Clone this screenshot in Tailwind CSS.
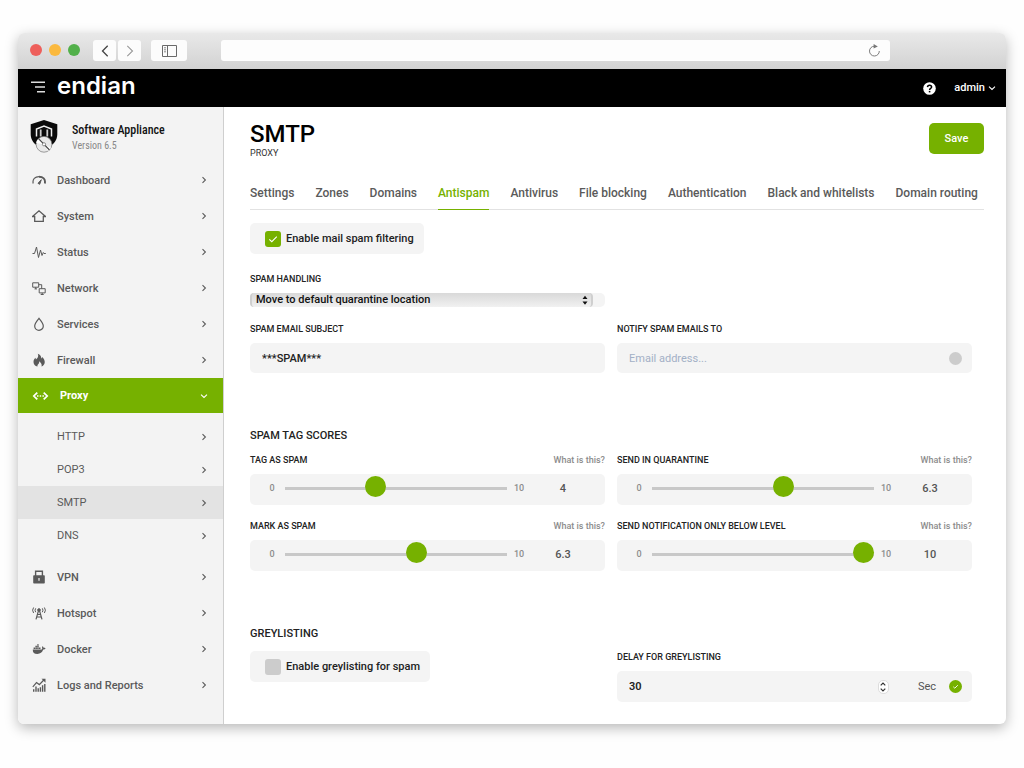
<!DOCTYPE html>
<html lang="en">
<head>
<meta charset="utf-8">
<meta name="viewport" content="width=device-width, initial-scale=1">
<title>SMTP Proxy – Endian</title>
<script src="https://cdn.jsdelivr.net/npm/@tailwindcss/browser@4"></script>
</head>
<body class="min-h-screen bg-[#fefefe] px-[18px] pt-[33px] pb-11 font-['Roboto',sans-serif] text-[11px] leading-[17px] font-medium text-[#222]">
<svg class="hidden" aria-hidden="true">
  <symbol id="chev" viewBox="0 0 8 8"><path d="M2.500 1.200 5.400 4 2.500 6.800" fill="none" stroke="currentColor" stroke-width="1.100"/></symbol>
  <symbol id="chevd" viewBox="0 0 8 8"><path d="M1 2.700 4 5.500 7 2.700" fill="none" stroke="currentColor" stroke-width="1.100"/></symbol>
</svg>
<div class="overflow-hidden rounded-md bg-white shadow-[0_4px_13px_rgba(0,0,0,0.28)]">

  <!-- Browser toolbar -->
  <div class="flex h-9 items-start bg-gradient-to-b from-[#e9e9e9] to-[#d2d2d2] pt-[7px] pl-3">
    <div class="flex h-[21px] items-center gap-[7px] pb-[2px]">
      <span class="size-3 rounded-full bg-[#ee5f5b]"></span>
      <span class="size-3 rounded-full bg-[#fbb93e]"></span>
      <span class="size-3 rounded-full bg-[#52b04a]"></span>
    </div>
    <div class="ml-[13px] flex gap-[2px]">
      <button aria-label="Back" class="flex h-[21px] w-[23px] items-center justify-center rounded-[3px] bg-[#fcfcfc]"><svg class="h-3 w-2" viewBox="0 0 8 12" fill="none" stroke="#444" stroke-width="1.300"><path d="M6.700.800 1.500 6l5.200 5.200"/></svg></button>
      <button aria-label="Forward" class="flex h-[21px] w-[23px] items-center justify-center rounded-[3px] bg-[#fcfcfc]"><svg class="h-3 w-2" viewBox="0 0 8 12" fill="none" stroke="#999" stroke-width="1.100"><path d="M1.300.800 6.500 6l-5.200 5.200"/></svg></button>
    </div>
    <button aria-label="Show sidebar" class="ml-[10px] flex h-[21px] w-9 items-center justify-center rounded-[3px] bg-[#fcfcfc]"><svg class="h-3 w-[15px]" viewBox="0 0 15 12" fill="none" stroke="#6a6a6a"><path d="M.5.500h14v11H.5zM5.500.500v11"/><path d="M2 2.800h2M2 4.800h2M2 6.800h2" stroke-width=".8"/></svg></button>
    <div class="mr-[116px] ml-[34px] flex h-[21px] min-w-0 flex-1 items-center rounded-[3px] bg-[#fdfdfd] pr-[9px]">
      <input aria-label="Address" type="text" class="h-full min-w-0 flex-1 bg-transparent px-2 outline-none">
      <button aria-label="Reload"><svg class="block size-[13px]" viewBox="0 0 13 13"><path d="M6.500 2.200A4.900 4.900 0 1 0 11.300 7" fill="none" stroke="#7c7c7c" stroke-width="1"/><path d="M5.600 0 9.800 2.400 5.600 4.600z" fill="#777"/></svg></button>
    </div>
  </div>

  <!-- Application header -->
  <header class="flex h-[38px] items-center justify-between bg-black pr-[10px] pl-[13px] text-white">
    <div class="flex items-center">
      <button aria-label="Menu" class="pb-[3px]"><svg class="block h-3 w-[15px]" viewBox="0 0 15 12" stroke="#ddd" stroke-width="1.500"><path d="M0 1.200h14M4 6h10M6 10.800h8"/></svg></button>
      <a href="#" class="ml-[11px] pb-[5px] font-['Inter',sans-serif] text-2xl leading-6 font-semibold">endian</a>
    </div>
    <div class="flex items-center">
      <button aria-label="Help"><svg class="block size-[13px]" viewBox="0 0 13 13"><circle cx="6.500" cy="6.500" r="6.300" fill="#fff"/><path d="M4.500 5.100c.1-2.500 4.100-2.400 4.100-.1 0 1.500-2 1.400-2 3" fill="none" stroke="#000" stroke-width="1.500"/><rect x="5.800" y="8.900" width="1.600" height="1.500" fill="#000"/></svg></button>
      <button class="ml-[18px] flex items-center gap-[3px] text-[11px] leading-4">admin <svg class="size-2"><use href="#chevd"/></svg></button>
    </div>
  </header>

  <div class="flex">
    <!-- Sidebar -->
    <aside class="w-[206px] shrink-0 border-r border-[#cfcfcf] bg-[#f3f3f3] text-[#5a5a5a]">
      <div class="flex h-[55px] items-start pt-[13px] pl-3">
        <svg class="h-[34px] w-7" viewBox="0 0 28 34">
          <path d="M14 0 27.300 4.300V14c0 6-3.500 10-8.300 13H9C4.200 24 .700 20 .700 14V4.300z" fill="#0a0a0a"/>
          <path d="M6.500 16.500V9L14 6l7.500 3v7.500" fill="none" stroke="#eee" stroke-width="1.500"/>
          <path d="M10.700 9.500v7M17.300 9.500v7" stroke="#ccc" stroke-width="1.800"/>
          <circle cx="14" cy="24.300" r="7.900" fill="#e9e9e9" stroke="#777" stroke-width=".7"/>
          <path d="M14 24.300 8.200 19A8 8 0 0 0 6.200 23zM14 24.300l7 3.500a8 8 0 0 1-3 3.200z" fill="#fff"/>
          <path d="M8.500 18.600 19.500 30" stroke="#444" stroke-width="1.100"/>
          <circle cx="14" cy="24.300" r="1.600" fill="#fff" stroke="#666" stroke-width=".7"/>
        </svg>
        <div class="ml-[14px] pt-[2px] font-['Roboto_Condensed','Liberation_Sans_Narrow','Roboto',sans-serif]">
          <div class="text-xs leading-4 font-medium text-[#111]">Software Appliance</div>
          <div class="text-[10px] leading-4 font-normal text-[#888]">Version 6.5</div>
        </div>
      </div>
      <nav aria-label="Main">
        <a href="#" class="flex h-9 items-center pr-[15px] pl-[14px]"><svg class="size-[14px]" viewBox="0 0 14 14" fill="none" stroke="currentColor"><path d="M1.200 10.500C.2 6 3.200 3.700 7 3.700" stroke-width="1.200"/><path d="M7 3.700c3.800 0 6.800 2.300 5.800 6.800" stroke-width="1.900"/><path d="M6 10.300 9.300 6.700 7.700 11.300z" fill="currentColor"/></svg><span class="ml-[11px] flex-1">Dashboard</span><svg class="size-2"><use href="#chev"/></svg></a>
        <a href="#" class="flex h-9 items-center pr-[15px] pl-[14px]"><svg class="size-[14px]" viewBox="0 0 14 14" fill="none" stroke="currentColor" stroke-width="1.300"><path d="M.5 7.500 7 1.800l6.500 5.700H11.300V12.400H2.700V7.500z"/></svg><span class="ml-[11px] flex-1">System</span><svg class="size-2"><use href="#chev"/></svg></a>
        <a href="#" class="flex h-9 items-center pr-[15px] pl-[14px]"><svg class="size-[14px]" viewBox="0 0 14 14" fill="none" stroke="currentColor" stroke-width="1"><path d="M.5 8.500h2L4.500 2 6.500 12.500 8.500 5l1.500 5.500 1.300-3 .7 1h1.800"/></svg><span class="ml-[11px] flex-1">Status</span><svg class="size-2"><use href="#chev"/></svg></a>
        <a href="#" class="flex h-9 items-center pr-[15px] pl-[14px]"><svg class="size-[14px]" viewBox="0 0 14 14" fill="none" stroke="currentColor" stroke-width="1"><path d="M.7 1.800h6v4.400h-6zM7.200 7.700h6v4.200h-6zM2.500 7.900H5M3.700 6.200v1.700M8.700 13.500h3M10.200 11.900v1.600M6.700 3.700h3v4"/></svg><span class="ml-[11px] flex-1">Network</span><svg class="size-2"><use href="#chev"/></svg></a>
        <a href="#" class="flex h-9 items-center pr-[15px] pl-[14px]"><svg class="size-[14px]" viewBox="0 0 14 14" fill="none" stroke="currentColor" stroke-width="1.200"><path d="M7 1.300C4.500 4.300 2.700 6.500 2.700 9a4.300 4.300 0 0 0 8.600 0C11.300 6.500 9.500 4.300 7 1.300z"/></svg><span class="ml-[11px] flex-1">Services</span><svg class="size-2"><use href="#chev"/></svg></a>
        <a href="#" class="flex h-9 items-center pr-[15px] pl-[14px]"><svg class="size-[14px]" viewBox="0 0 14 14" fill="currentColor"><path d="M5.800.800C9 2.200 9.300 4 9.200 5.600c.5-.4.8-.9.900-1.600C12 5.700 13 7.700 12.700 9.700c-.3 2-1.500 3-3.200 3.800.7-2.200-.4-3.600-2.300-5.200.2 2-.7 2.600-1.300 3.300-.5.700-.6 1.400-.4 2-2.500-.8-4-2.400-4-4.700 0-1.800 1-2.900 1.700-4.100.5.500.7 1 .7 1.700C6 5 6.800 3.300 5.800.800z"/></svg><span class="ml-[11px] flex-1">Firewall</span><svg class="size-2"><use href="#chev"/></svg></a>
        <a href="#" aria-current="true" class="flex h-[35px] items-center bg-[#76b100] pr-[15px] pl-[14px] text-white"><svg class="h-[14px] w-[17px]" viewBox="0 0 17 14" fill="none" stroke="currentColor" stroke-width="1.700"><path d="M5.300 3.600 1.800 7l3.500 3.400M11.700 3.600 15.200 7l-3.500 3.400"/><path d="M5 7h1.500M7.700 7h1.500M10.400 7h1.500" stroke-width="1.500"/></svg><span class="ml-[11px] flex-1 font-bold">Proxy</span><svg class="size-2"><use href="#chevd"/></svg></a>
        <div class="py-[7px] font-normal">
          <a href="#" class="flex h-[33px] items-center pr-[15px] pl-[39px]"><span class="flex-1">HTTP</span><svg class="size-2"><use href="#chev"/></svg></a>
          <a href="#" class="flex h-[33px] items-center pr-[15px] pl-[39px]"><span class="flex-1">POP3</span><svg class="size-2"><use href="#chev"/></svg></a>
          <a href="#" aria-current="page" class="flex h-[33px] items-center bg-[#e3e3e3] pr-[15px] pl-[39px]"><span class="flex-1">SMTP</span><svg class="size-2"><use href="#chev"/></svg></a>
          <a href="#" class="flex h-[33px] items-center pr-[15px] pl-[39px]"><span class="flex-1">DNS</span><svg class="size-2"><use href="#chev"/></svg></a>
        </div>
        <a href="#" class="flex h-9 items-center pr-[15px] pl-[14px]"><svg class="size-[14px]" viewBox="0 0 14 14"><path d="M3.600 6V1.300h6.800V6" fill="none" stroke="currentColor" stroke-width="1.400"/><rect x="1.200" y="5.200" width="11.600" height="8.300" rx=".8" fill="currentColor"/><path d="M6.300 8h1.400v2.800H6.300z" fill="#ddd"/></svg><span class="ml-[11px] flex-1">VPN</span><svg class="size-2"><use href="#chev"/></svg></a>
        <a href="#" class="flex h-9 items-center pr-[15px] pl-[14px]"><svg class="size-[14px]" viewBox="0 0 14 14" fill="none" stroke="currentColor" stroke-width="1"><path d="M1.600 1.500Q-.4 4.200 1.600 7M3.700 2.300Q2.300 4.200 3.700 6.200M12.400 1.500q2 2.700 0 5.500M10.300 2.300q1.400 1.900 0 3.900"/><circle cx="7" cy="4" r="1.300" fill="currentColor"/><path d="M6.400 5 4 13.300M7.600 5 10 13.300M5.500 8.500h3M4.700 11h4.600" stroke-width="1.200"/></svg><span class="ml-[11px] flex-1">Hotspot</span><svg class="size-2"><use href="#chev"/></svg></a>
        <a href="#" class="flex h-9 items-center pr-[15px] pl-[14px]"><svg class="size-[14px]" viewBox="0 0 14 14" fill="currentColor"><path d="M.8 7.400h9c.6-.4.600-1.600.100-2.500l.7-.6c.7.500 1 1 1.100 1.600.7-.1 1.400 0 1.800.300-.4 1-1.200 1.400-2.300 1.400C10.200 10.500 8.300 12 5.400 12 2.300 12 .5 10.500.8 7.400z"/><path d="M1.600 5.500h1.500V7H1.600zM3.400 5.500h1.500V7H3.400zM5.200 5.500h1.500V7H5.200zM7 5.500h1.500V7H7zM3.400 3.800h1.500v1.400H3.400zM5.200 3.800h1.500v1.400H5.200zM5.200 2.200h1.500v1.300H5.200z"/></svg><span class="ml-[11px] flex-1">Docker</span><svg class="size-2"><use href="#chev"/></svg></a>
        <a href="#" class="flex h-9 items-center pr-[15px] pl-[14px]"><svg class="size-[14px]" viewBox="0 0 14 14"><path d="M.8 8.800 4.500 4.600l2.800 2L11.800 2" fill="none" stroke="currentColor" stroke-width="1.200"/><path d="M9.500.700h4v4z" fill="currentColor"/><path d="M1.700 13.800v-2.500M4 13.800V8.500M6.200 13.800v-3.500M8.400 13.800V9.300M10.600 13.800V7.300M12.800 13.800V6" stroke="currentColor" stroke-width="1.400"/></svg><span class="ml-[11px] flex-1">Logs and Reports</span><svg class="size-2"><use href="#chev"/></svg></a>
      </nav>
    </aside>

    <!-- Content -->
    <main class="min-w-0 flex-1 pt-4 pr-[22px] pb-[22px] pl-[26px]">
      <div class="flex items-start justify-between">
        <div>
          <h1 class="text-2xl leading-[22px] font-medium text-black">SMTP</h1>
          <p class="mt-[2px] text-[9px] leading-3 font-normal text-[#333]">PROXY</p>
        </div>
        <button class="h-[31px] w-[55px] rounded-[5px] bg-[#76b100] text-[11px] text-white">Save</button>
      </div>

      <nav aria-label="SMTP proxy sections" class="mt-6 flex justify-between border-b border-[#e2e2e2] pr-[6px] text-xs leading-5 whitespace-nowrap text-[#5a5a5a]">
        <a href="#" class="pb-[6px]">Settings</a>
        <a href="#" class="pb-[6px]">Zones</a>
        <a href="#" class="pb-[6px]">Domains</a>
        <a href="#" aria-current="page" class="-mb-px border-b border-[#76b100] pb-[6px] text-[#76b100]">Antispam</a>
        <a href="#" class="pb-[6px]">Antivirus</a>
        <a href="#" class="pb-[6px]">File blocking</a>
        <a href="#" class="pb-[6px]">Authentication</a>
        <a href="#" class="pb-[6px]">Black and whitelists</a>
        <a href="#" class="pb-[6px]">Domain routing</a>
      </nav>

      <form class="pr-3">
        <label class="mt-[13px] flex h-[31px] w-fit items-center gap-[5px] rounded-[5px] bg-[#f4f4f4] pr-[10px] pl-[15px]">
          <span class="grid">
            <input type="checkbox" checked class="col-start-1 row-start-1 size-4 appearance-none rounded-[3px] bg-[#ccc] checked:bg-[#76b100]">
            <svg class="pointer-events-none col-start-1 row-start-1 size-4" viewBox="0 0 16 16" fill="none" stroke="#fff" stroke-width="1.100"><path d="m4.300 8.300 2.500 2.400 5-5"/></svg>
          </span>
          Enable mail spam filtering
        </label>

        <div class="mt-[19px] grid grid-cols-2 gap-x-3">
          <div>
            <label for="handling" class="block text-[9px] leading-3">SPAM HANDLING</label>
            <div class="mt-2 grid h-[14px] rounded-[5px] bg-[#f4f4f4] pr-3">
              <select id="handling" class="col-start-1 row-start-1 h-[14px] appearance-none rounded-[4px] border-x-2 border-[#cfcfcf] bg-gradient-to-b from-[#d9d9d9] to-[#f1f1f1] pl-1 text-[11px] leading-[14px] font-medium text-[#111]">
                <option>Move to default quarantine location</option>
              </select>
              <svg class="pointer-events-none col-start-1 row-start-1 mr-[5px] h-[14px] w-[6px] justify-self-end" viewBox="0 0 6 14"><path d="M3 2.700 5.500 6H.5zM3 11.700 5.500 8.400H.5z" fill="#111"/></svg>
            </div>
          </div>
        </div>

        <div class="mt-4 grid grid-cols-2 gap-x-3">
          <div>
            <label for="subject" class="block text-[9px] leading-3">SPAM EMAIL SUBJECT</label>
            <input id="subject" type="text" value="***SPAM***" class="mt-2 block h-[30px] w-full rounded-[5px] bg-[#f4f4f4] px-3 text-[11px] font-medium outline-none">
          </div>
          <div>
            <label for="notify" class="block text-[9px] leading-3">NOTIFY SPAM EMAILS TO</label>
            <div class="mt-2 flex h-[30px] items-center rounded-[5px] bg-[#f4f4f4] pr-[10px] pl-3">
              <input id="notify" type="email" placeholder="Email address..." class="h-full min-w-0 flex-1 bg-transparent text-[11px] outline-none placeholder:font-normal placeholder:text-[#a3b0c6]">
              <span class="size-[13px] rounded-full bg-[#ccc]"></span>
            </div>
          </div>
        </div>

        <h2 class="mt-[55px] text-[11px] leading-4 font-medium">SPAM TAG SCORES</h2>
        <div class="mt-[10px] grid grid-cols-2 gap-x-3 gap-y-[15px]">
          <div>
            <div class="flex justify-between text-[9px] leading-3"><label for="tag">TAG AS SPAM</label><a href="#" class="text-[#8c8c8c]">What is this?</a></div>
            <div class="mt-2 flex h-[31px] items-center rounded-[5px] bg-[#f4f4f4] pb-[2px] text-[9px] text-[#8c8c8c]">
              <span class="w-[35px] pl-[9px] text-center">0</span>
              <input id="tag" type="range" min="0" max="10" value="4" class="h-[21px] min-w-0 flex-1 appearance-none bg-transparent [&::-webkit-slider-runnable-track]:h-[3px] [&::-webkit-slider-runnable-track]:bg-[#c8c8c8] [&::-webkit-slider-thumb]:-mt-[11px] [&::-webkit-slider-thumb]:size-[21px] [&::-webkit-slider-thumb]:appearance-none [&::-webkit-slider-thumb]:rounded-full [&::-webkit-slider-thumb]:bg-[#76b100]">
              <span class="w-6 text-center">10</span>
              <output for="tag" class="mr-[30px] w-11 pl-[20px] text-center text-[11px] text-[#555]">4</output>
            </div>
          </div>
          <div>
            <div class="flex justify-between text-[9px] leading-3"><label for="quarantine">SEND IN QUARANTINE</label><a href="#" class="text-[#8c8c8c]">What is this?</a></div>
            <div class="mt-2 flex h-[31px] items-center rounded-[5px] bg-[#f4f4f4] pb-[2px] text-[9px] text-[#8c8c8c]">
              <span class="w-[35px] pl-[9px] text-center">0</span>
              <input id="quarantine" type="range" min="0" max="10" value="6" class="h-[21px] min-w-0 flex-1 appearance-none bg-transparent [&::-webkit-slider-runnable-track]:h-[3px] [&::-webkit-slider-runnable-track]:bg-[#c8c8c8] [&::-webkit-slider-thumb]:-mt-[11px] [&::-webkit-slider-thumb]:size-[21px] [&::-webkit-slider-thumb]:appearance-none [&::-webkit-slider-thumb]:rounded-full [&::-webkit-slider-thumb]:bg-[#76b100]">
              <span class="w-6 text-center">10</span>
              <output for="quarantine" class="mr-[30px] w-11 pl-[20px] text-center text-[11px] text-[#555]">6.3</output>
            </div>
          </div>
          <div>
            <div class="flex justify-between text-[9px] leading-3"><label for="mark">MARK AS SPAM</label><a href="#" class="text-[#8c8c8c]">What is this?</a></div>
            <div class="mt-2 flex h-[31px] items-center rounded-[5px] bg-[#f4f4f4] pb-[2px] text-[9px] text-[#8c8c8c]">
              <span class="w-[35px] pl-[9px] text-center">0</span>
              <input id="mark" type="range" min="0" max="10" value="6" class="h-[21px] min-w-0 flex-1 appearance-none bg-transparent [&::-webkit-slider-runnable-track]:h-[3px] [&::-webkit-slider-runnable-track]:bg-[#c8c8c8] [&::-webkit-slider-thumb]:-mt-[11px] [&::-webkit-slider-thumb]:size-[21px] [&::-webkit-slider-thumb]:appearance-none [&::-webkit-slider-thumb]:rounded-full [&::-webkit-slider-thumb]:bg-[#76b100]">
              <span class="w-6 text-center">10</span>
              <output for="mark" class="mr-[30px] w-11 pl-[20px] text-center text-[11px] text-[#555]">6.3</output>
            </div>
          </div>
          <div>
            <div class="flex justify-between text-[9px] leading-3"><label for="below">SEND NOTIFICATION ONLY BELOW LEVEL</label><a href="#" class="text-[#8c8c8c]">What is this?</a></div>
            <div class="mt-2 flex h-[31px] items-center rounded-[5px] bg-[#f4f4f4] pb-[2px] text-[9px] text-[#8c8c8c]">
              <span class="w-[35px] pl-[9px] text-center">0</span>
              <input id="below" type="range" min="0" max="10" value="10" class="h-[21px] min-w-0 flex-1 appearance-none bg-transparent [&::-webkit-slider-runnable-track]:h-[3px] [&::-webkit-slider-runnable-track]:bg-[#c8c8c8] [&::-webkit-slider-thumb]:-mt-[11px] [&::-webkit-slider-thumb]:size-[21px] [&::-webkit-slider-thumb]:appearance-none [&::-webkit-slider-thumb]:rounded-full [&::-webkit-slider-thumb]:bg-[#76b100]">
              <span class="w-6 text-center">10</span>
              <output for="below" class="mr-[30px] w-11 pl-[20px] text-center text-[11px] text-[#555]">10</output>
            </div>
          </div>
        </div>

        <h2 class="mt-[55px] text-[11px] leading-4 font-medium">GREYLISTING</h2>
        <div class="mt-[9px] grid grid-cols-2 items-start gap-x-3">
          <label class="flex h-[31px] w-fit items-center gap-[5px] rounded-[5px] bg-[#f4f4f4] pr-[10px] pl-[15px]">
            <input type="checkbox" class="size-4 appearance-none rounded-[3px] bg-[#ccc] checked:bg-[#76b100]">
            Enable greylisting for spam
          </label>
          <div>
            <label for="delay" class="block text-[9px] leading-3">DELAY FOR GREYLISTING</label>
            <div class="mt-2 flex h-[31px] items-center rounded-[5px] bg-[#f4f4f4] pr-[10px] pl-3">
              <input id="delay" type="number" value="30" class="h-full min-w-0 flex-1 appearance-none bg-transparent text-[11px] font-semibold outline-none [&::-webkit-inner-spin-button]:appearance-none">
              <span class="flex w-[11px] flex-col overflow-hidden rounded-[5px] border border-[#ddd] bg-white">
                <button type="button" aria-label="Increase" class="flex h-[6px] items-center justify-center"><svg class="h-1 w-[6px]" viewBox="0 0 6 4" fill="none" stroke="#333" stroke-width="1.200"><path d="M.7 3.300 3 1l2.300 2.300"/></svg></button>
                <button type="button" aria-label="Decrease" class="flex h-[6px] items-center justify-center"><svg class="h-1 w-[6px]" viewBox="0 0 6 4" fill="none" stroke="#333" stroke-width="1.200"><path d="M.7.700 3 3 5.300.700"/></svg></button>
              </span>
              <span class="mr-[13px] ml-[29px] font-normal text-[#555]">Sec</span>
              <svg class="size-[13px]" viewBox="0 0 13 13"><circle cx="6.500" cy="6.500" r="6.500" fill="#76b100"/><path d="m4.300 6.800 1.500 1.400 3-3" fill="none" stroke="#fff" stroke-width=".9"/></svg>
            </div>
          </div>
        </div>
      </form>
    </main>
  </div>
</div>
</body>
</html>
